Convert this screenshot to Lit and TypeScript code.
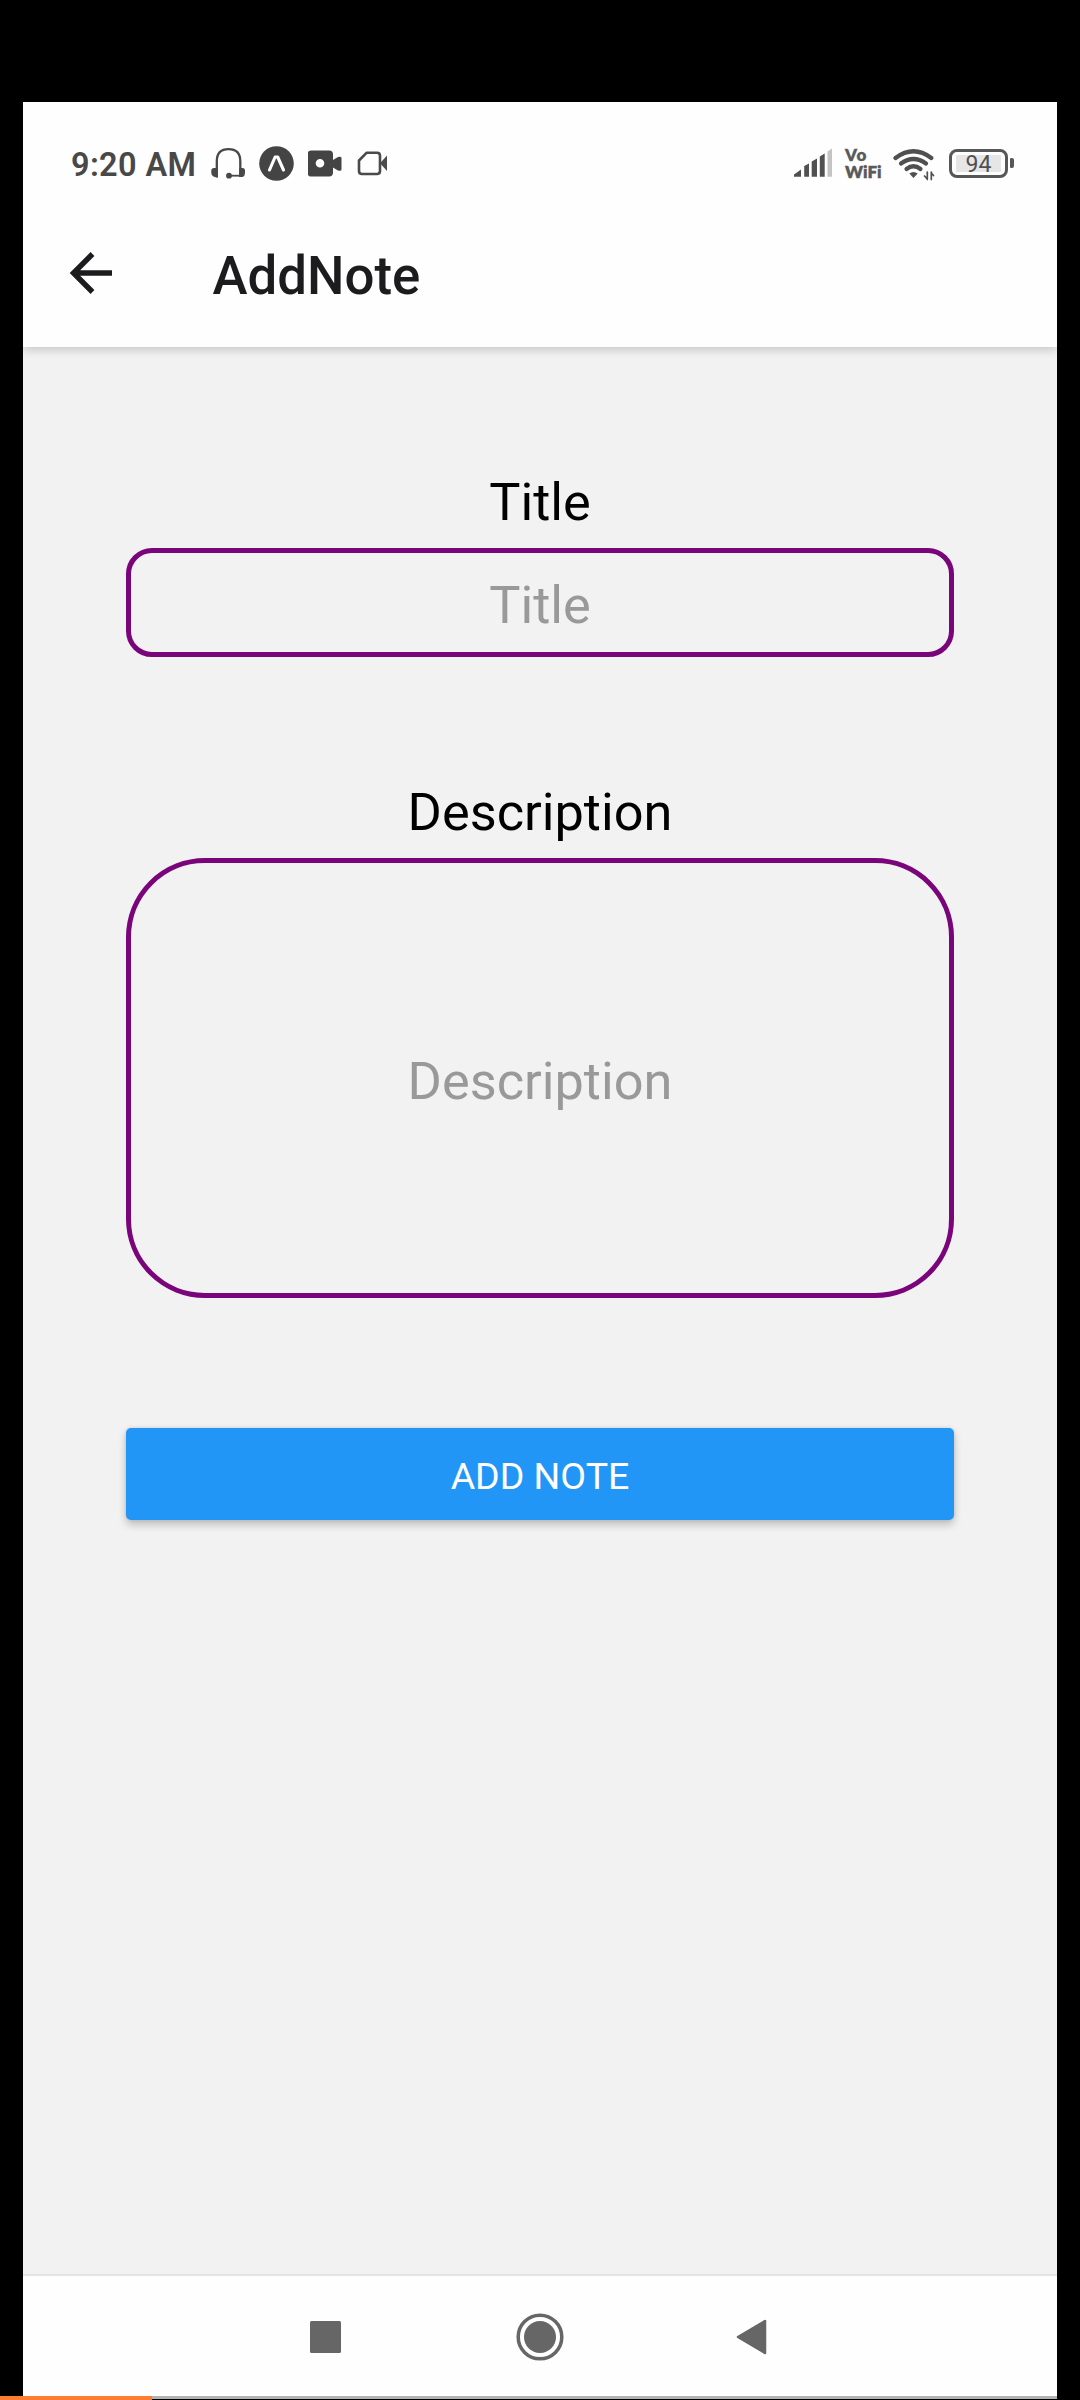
import { LitElement, html, css } from "lit";
import { customElement, property } from "lit/decorators.js";

@customElement("status-bar")
class StatusBar extends LitElement {
  static styles = css`
    :host {
      display: flex;
      align-items: center;
      height: 122px;
      box-sizing: border-box;
      padding: 0 43px 0 48px;
      color: #484848;
      font-family: Roboto, "Liberation Sans", sans-serif;
    }
    svg {
      display: block;
      flex: none;
    }
    .time {
      width: 140px;
      flex: none;
      font-size: 32.5px;
      font-weight: 600;
      letter-spacing: 0.35px;
      line-height: 34px;
      padding-top: 3px;
      white-space: nowrap;
    }
    .left {
      display: flex;
      align-items: center;
      gap: 14px;
      flex: 1;
    }
    .right {
      display: flex;
      align-items: center;
    }
    .vowifi {
      width: 60px;
      padding: 0 0 0 12px;
      box-sizing: border-box;
      font-family: Lato, "Open Sans", sans-serif;
      font-weight: 800;
      font-size: 17px;
      line-height: 17px;
      color: #5a5a5a;
      -webkit-text-stroke: 0.3px #5a5a5a;
    }
    .vo {
      display: block;
      letter-spacing: 0.8px;
    }
    .battery {
      display: flex;
      align-items: center;
      margin-left: 14px;
      gap: 2px;
    }
    .cell {
      width: 59px;
      height: 29px;
      box-sizing: border-box;
      border: 3px solid #575757;
      border-radius: 8px;
      padding: 3px 4px;
    }
    .level {
      background: #e6e6e6;
      height: 17px;
      line-height: 19px;
      text-align: center;
      font-size: 23px;
      font-weight: 400;
      color: #505050;
    }
    .nub {
      width: 4px;
      height: 10px;
      border-radius: 1px 2px 2px 1px;
      background: #575757;
    }
  `;

  render() {
    return html`
      <div class="time">9:20 AM</div>
      <div class="left">
        <svg width="34" height="34" viewBox="211 146 34 34" fill="none" stroke="#484848">
          <path d="M216.8 177V161.500C216.800 153 221.500 149.200 228.500 149.200S240.300 153 240.300 161.500V177" stroke-width="2.300" />
          <path d="M230 175.700H241" stroke-width="1.800" />
          <path d="M217.800 168V178L213.500 176.500Q211.300 175.500 211.300 173V170.500Q211.300 168 214 168ZM239.300 168V177H242.500Q245 176 245 173V170.500Q245 168 242.500 168Z" fill="#484848" stroke="none" />
          <circle cx="229" cy="175.700" r="2.900" fill="#484848" stroke="none" />
        </svg>
        <svg width="35" height="35" viewBox="259.500 145.500 35 35">
          <circle cx="277" cy="163" r="17.300" fill="#444" />
          <path d="M270 169.500L275.600 156.500H278.200L284 169.500" fill="none" stroke="#fff" stroke-width="3.100" stroke-linecap="round" stroke-linejoin="round" />
        </svg>
        <svg width="35" height="34" viewBox="308 146 35 34">
          <path fill-rule="evenodd" fill="#444" d="M311 150.500H329Q333 150.500 333 154.500V160L338 157Q341.500 156 341.500 158V169.500Q341.500 171.500 338 170.500L333 167.500V172.500Q333 176.500 329 176.500H311Q307.500 176.500 307.500 172.500V154.500Q307.500 150.500 311 150.500ZM320 159A4.300 4.300 0 1 0 320 167.600A4.300 4.300 0 1 0 320 159Z" />
        </svg>
        <svg width="32" height="34" viewBox="357 146 32 34">
          <path d="M366.500 152.800H377Q380 152.800 380 155.800V171Q380 174 377 174H362Q359 174 359 171V160.500Z" fill="none" stroke="#4a4a4a" stroke-width="2.600" stroke-linejoin="round" />
          <path d="M380 163.300L387 155.500V171Z" fill="#4a4a4a" />
        </svg>
      </div>
      <div class="right">
        <svg width="39" height="34" viewBox="794 146 39 34" fill="#505050">
          <path d="M794 176.700V174.500L801 169.500V176.700ZM804.200 176.700V166L809 163.500V176.700ZM811.700 176.700V161.500L817 158.500V176.700ZM819.800 176.700V156.500L824.700 153.500V176.700Z" />
          <path d="M827.500 176.700V151.500L832 148.500V176.700Z" fill="#c4c4c4" />
        </svg>
        <div class="vowifi"><span class="vo">Vo</span>WiFi</div>
        <svg width="42" height="36" viewBox="893 145 42 36" fill="none" stroke="#505050" stroke-width="4.200" stroke-linecap="round">
          <path d="M895.500 158Q913.500 144.500 931.300 158" />
          <path d="M901 163.500Q913.500 154.500 926 163.500" />
          <path d="M906.500 169Q913.500 163.500 920.500 169" />
          <path d="M909.300 173.500Q913.500 170.500 917.700 173.500L913.500 178Z" fill="#505050" stroke="none" />
          <path d="M927.300 172V179.500M927.300 179L924.500 176M931.300 179.500V172M931.300 173L933.500 175.500" stroke-width="1.700" />
        </svg>
        <div class="battery">
          <div class="cell"><div class="level">94</div></div>
          <div class="nub"></div>
        </div>
      </div>
    `;
  }
}

@customElement("note-field")
class NoteField extends LitElement {
  @property() label = "";
  @property({ type: Boolean, reflect: true }) multiline = false;

  static styles = css`
    :host {
      display: block;
      font-family: Roboto, "Liberation Sans", sans-serif;
      font-size: 52.300px;
      text-align: center;
      color: #000;
    }
    .label {
      line-height: 70px;
      margin-bottom: 11px;
    }
    .input {
      display: block;
      width: 100%;
      box-sizing: border-box;
      height: 109px;
      border: 5px solid #7a057a;
      border-radius: 26px;
      background: transparent;
      padding: 5px 0 0;
      margin: 0;
      font: inherit;
      text-align: center;
      outline: none;
    }
    .input::placeholder {
      color: #999;
      opacity: 1;
    }
    :host([multiline]) .input {
      height: 440px;
      border-radius: 79px;
      padding-top: 6px;
    }
  `;

  render() {
    return html`
      <div class="label">${this.label}</div>
      <input class="input" placeholder=${this.label} aria-label=${this.label} />
    `;
  }
}

@customElement("app-root")
class AppRoot extends LitElement {
  static styles = css`
    :host {
      display: flex;
      flex-direction: column;
      width: 1080px;
      height: 2400px;
      box-sizing: border-box;
      padding-top: 102px;
      background: #000;
      overflow: hidden;
      font-family: Roboto, "Liberation Sans", sans-serif;
    }
    svg {
      display: block;
      flex: none;
    }
    .phone {
      display: flex;
      flex-direction: column;
      height: 2294px;
      width: 1034px;
      margin: 0 auto;
      background: #f2f2f2;
    }
    .top {
      background: #fefefe;
      height: 245px;
      box-shadow: 0 3px 9px rgba(0, 0, 0, 0.18);
      clip-path: inset(0 0 -14px 0);
    }
    .appbar {
      display: flex;
      align-items: center;
      height: 123px;
      box-sizing: border-box;
      padding: 0 0 25px 46px;
    }
    .title {
      margin: 6px 0 0 99.500px;
      font-size: 52.800px;
      font-weight: 500;
      line-height: 62px;
      color: #1c1c1e;
    }
    .form {
      flex: 1;
      display: flex;
      flex-direction: column;
      padding: 120px 103px 0;
    }
    .second {
      margin-top: 120px;
    }
    .submit {
      margin: 130px 0 0;
      height: 92px;
      border: 0;
      border-radius: 5px;
      padding: 4px 0 0;
      background: #2296f6;
      color: #fff;
      font-family: inherit;
      font-size: 37.500px;
      box-shadow: 0 5px 8px rgba(0, 0, 0, 0.2), 0 0 4px rgba(0, 0, 0, 0.12);
    }
    .nav {
      display: flex;
      align-items: center;
      height: 122px;
      box-sizing: border-box;
      border-top: 2px solid #e4e4e4;
      background: #fefefe;
      padding: 2px 0 0 287px;
    }
    .home {
      margin-left: 174.500px;
    }
    .back {
      margin-left: 172.500px;
    }
    .progress {
      display: flex;
      height: 4px;
    }
    .played {
      width: 152px;
      background: #fd7e32;
    }
    .rest {
      width: 905px;
      height: 3px;
      background: #b2b2b2;
    }
  `;

  render() {
    return html`
      <div class="phone">
        <div class="top">
          <status-bar></status-bar>
          <div class="appbar">
            <svg width="44" height="44" viewBox="69 251 44 44" fill="none" stroke="#1c1c1e" stroke-width="5.400">
              <path d="M92.500 254L73.500 273L92.500 292M73 273H112" />
            </svg>
            <div class="title">AddNote</div>
          </div>
        </div>
        <div class="form">
          <note-field label="Title"></note-field>
          <note-field class="second" label="Description" multiline></note-field>
          <button class="submit">ADD NOTE</button>
        </div>
        <div class="nav">
          <svg width="31" height="32" viewBox="0 0 31 32"><rect width="31" height="32" rx="1.500" fill="#666" /></svg>
          <svg class="home" width="48" height="48" viewBox="0 0 48 48">
            <circle cx="24" cy="24" r="21.800" fill="none" stroke="#666" stroke-width="3.500" />
            <circle cx="24" cy="24" r="16" fill="#666" />
          </svg>
          <svg class="back" width="32" height="36" viewBox="0 0 32 36">
            <path d="M2 18L29 2V34Z" fill="#666" stroke="#666" stroke-width="2.500" stroke-linejoin="round" />
          </svg>
        </div>
      </div>
      <div class="progress"><div class="played"></div><div class="rest"></div></div>
    `;
  }
}
